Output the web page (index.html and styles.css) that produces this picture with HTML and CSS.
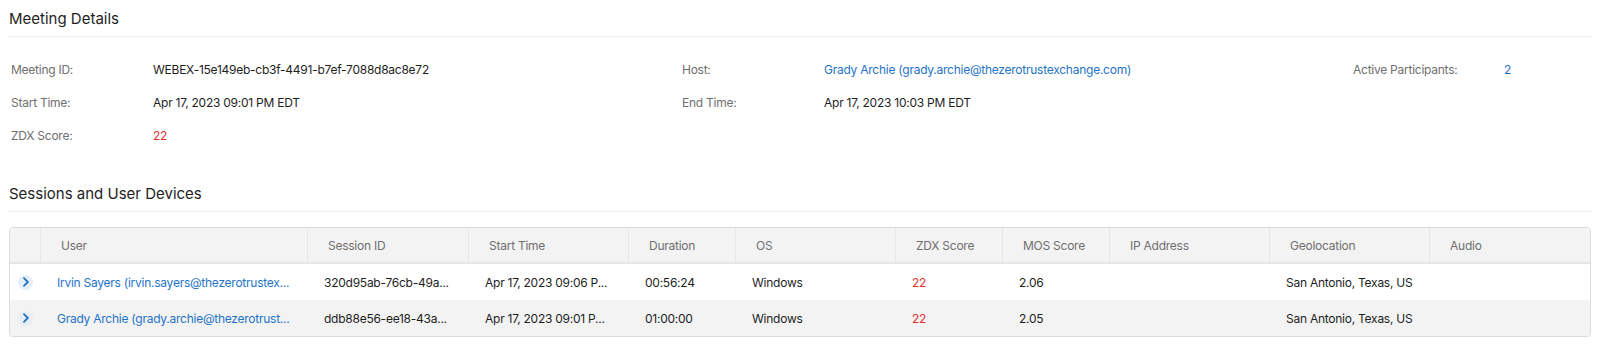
FILE: index.html
```html
<!DOCTYPE html>
<html lang="en">
<head>
    <meta charset="UTF-8">
    <meta name="viewport" content="width=device-width, initial-scale=1.0">
    <title>Meeting Details</title>
    <link rel="stylesheet" href="styles.css">
</head>
<body>

    <div class="page">
        <h2 class="section-title">Meeting Details</h2>

        <div class="details">
            <div class="detail-row">
                <div class="detail">
                    <span class="label">Meeting ID:</span>
                    <span class="value">WEBEX-15e149eb-cb3f-4491-b7ef-7088d8ac8e72</span>
                </div>
                <div class="detail">
                    <span class="label">Host:</span>
                    <span class="value link">Grady Archie (grady.archie@thezerotrustexchange.com)</span>
                </div>
                <div class="detail">
                    <span class="label label-wide">Active Participants:</span>
                    <span class="value link">2</span>
                </div>
            </div>
            <div class="detail-row">
                <div class="detail">
                    <span class="label">Start Time:</span>
                    <span class="value">Apr 17, 2023 09:01 PM EDT</span>
                </div>
                <div class="detail">
                    <span class="label">End Time:</span>
                    <span class="value">Apr 17, 2023 10:03 PM EDT</span>
                </div>
                <div class="detail"></div>
            </div>
            <div class="detail-row">
                <div class="detail">
                    <span class="label">ZDX Score:</span>
                    <span class="value score">22</span>
                </div>
                <div class="detail"></div>
                <div class="detail"></div>
            </div>
        </div>

        <h2 class="section-title">Sessions and User Devices</h2>

        <div class="grid-table">
            <div class="grid-row grid-head">
                <div class="cell"></div>
                <div class="cell">User</div>
                <div class="cell">Session ID</div>
                <div class="cell">Start Time</div>
                <div class="cell">Duration</div>
                <div class="cell">OS</div>
                <div class="cell">ZDX Score</div>
                <div class="cell">MOS Score</div>
                <div class="cell">IP Address</div>
                <div class="cell">Geolocation</div>
                <div class="cell">Audio</div>
            </div>

            <div class="grid-row">
                <div class="cell cell-expand">
                    <span class="expander">
                        <svg width="8" height="10" viewBox="0 0 8 10"><path d="M2 1.2 L5.8 5 L2 8.8" fill="none" stroke="#1f74c8" stroke-width="1.8" stroke-linecap="round" stroke-linejoin="round"/></svg>
                    </span>
                </div>
                <div class="cell link">Irvin Sayers (irvin.sayers@thezerotrustex...</div>
                <div class="cell">320d95ab-76cb-49a...</div>
                <div class="cell">Apr 17, 2023 09:06 P...</div>
                <div class="cell">00:56:24</div>
                <div class="cell">Windows</div>
                <div class="cell score">22</div>
                <div class="cell">2.06</div>
                <div class="cell"></div>
                <div class="cell">San Antonio, Texas, US</div>
                <div class="cell"></div>
            </div>

            <div class="grid-row row-alt">
                <div class="cell cell-expand">
                    <span class="expander">
                        <svg width="8" height="10" viewBox="0 0 8 10"><path d="M2 1.2 L5.8 5 L2 8.8" fill="none" stroke="#1f74c8" stroke-width="1.8" stroke-linecap="round" stroke-linejoin="round"/></svg>
                    </span>
                </div>
                <div class="cell link">Grady Archie (grady.archie@thezerotrust...</div>
                <div class="cell">ddb88e56-ee18-43a...</div>
                <div class="cell">Apr 17, 2023 09:01 P...</div>
                <div class="cell">01:00:00</div>
                <div class="cell">Windows</div>
                <div class="cell score">22</div>
                <div class="cell">2.05</div>
                <div class="cell"></div>
                <div class="cell">San Antonio, Texas, US</div>
                <div class="cell"></div>
            </div>
        </div>
    </div>

</body>
</html>
```

FILE: styles.css
```css
body {
    font-family: 'Inter', 'Noto Sans', sans-serif;
    font-size: 12px;
    letter-spacing: -0.25px;
    color: #1e1e1e;
    background-color: #ffffff;
    margin: 0;
    padding: 0;
}

.page {
    padding: 0 9px;
}

.section-title {
    font-size: 15px;
    font-weight: normal;
    line-height: 20px;
    letter-spacing: 0;
    color: #1e1e1e;
    margin: 0;
    padding: 9px 0 7px;
    border-bottom: 1px solid #efefef;
}

.details {
    padding: 16px 0 23px 2px;
}

.detail-row {
    display: grid;
    grid-template-columns: 671px 671px 1fr;
    height: 33px;
    align-items: center;
}

.detail {
    display: flex;
}

.label {
    width: 142px;
    flex-shrink: 0;
    color: #6f6f6f;
}

.label-wide {
    width: 151px;
}

.value {
    color: #1e1e1e;
}

.link {
    color: #1f74c8;
}

.score {
    color: #e0312b;
}

.grid-table {
    margin-top: 15px;
    border: 1px solid #dcdcdc;
    border-radius: 4px;
    overflow: hidden;
}

.grid-row {
    display: grid;
    grid-template-columns: 30px 267px 161px 160px 107px 160px 107px 107px 160px 160px 1fr;
    height: 36px;
    align-items: center;
}

.grid-head {
    height: 34px;
    background-color: #f3f3f3;
    border-bottom: 2px solid #e6e6e6;
    color: #6f6f6f;
    align-items: stretch;
}

.grid-head .cell {
    display: flex;
    align-items: center;
    padding-left: 20px;
    border-left: 1px solid #e6e6e6;
}

.grid-head .cell:first-child {
    border-left: none;
    padding-left: 0;
}

.cell {
    padding-left: 17px;
    padding-right: 8px;
    white-space: nowrap;
    overflow: hidden;
}

.cell-expand {
    padding: 0 0 0 8px;
    display: flex;
    align-items: center;
}

.row-alt {
    background-color: #f3f3f3;
}

.expander {
    width: 15px;
    height: 15px;
    border-radius: 50%;
    background-color: #e7f0fa;
    display: flex;
    align-items: center;
    justify-content: center;
}

.row-alt .expander {
    background-color: #e9eef4;
}
```
